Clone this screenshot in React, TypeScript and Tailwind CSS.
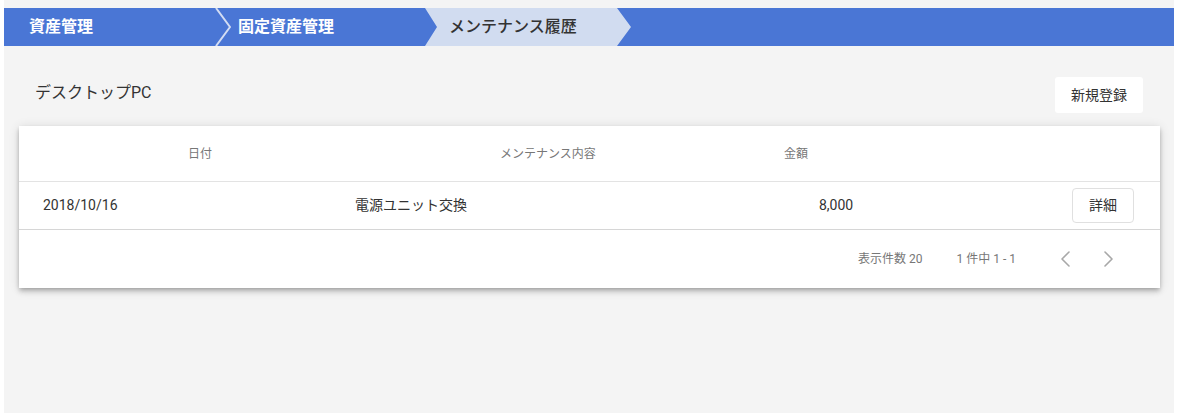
const font = { fontFamily: 'Roboto, "Noto Sans CJK JP", sans-serif' };

const Chevron = ({ dir }: { dir: "left" | "right" }) => (
  <svg width="11" height="18" viewBox="0 0 11 18" fill="none">
    <polyline
      points={dir === "left" ? "9,2 2,9 9,16" : "2,2 9,9 2,16"}
      stroke="#a8a8a8"
      strokeWidth="1.6"
      strokeLinecap="round"
      strokeLinejoin="round"
    />
  </svg>
);

const App = () => {
  return (
    <div className="min-h-[413px] bg-white" style={font}>
      <div className="ml-[4px] w-[1170px] min-h-[413px] bg-[#f4f4f4] pt-[8px]">
        {/* breadcrumb */}
        <div className="flex h-[38px] bg-[#4a76d5]">
          <div className="w-[211px] flex items-center pl-[25px] text-white font-bold text-[16px]">
            資産管理
          </div>
          <svg width="16" height="38" viewBox="0 0 16 38" fill="none" className="shrink-0">
            <polyline points="1,0 15,19 1,38" stroke="#d3ddf3" strokeWidth="2" />
          </svg>
          <div className="w-[194px] flex items-center pl-[7px] text-white font-bold text-[16px]">
            固定資産管理
          </div>
          <div className="w-[206px] flex items-center pl-[24px] bg-[#d1dcf0] text-[#333] font-medium text-[16px] [clip-path:polygon(0_0,192px_0,206px_50%,192px_100%,0_100%,12px_50%)]">
            メンテナンス履歴
          </div>
        </div>

        {/* title row */}
        <div className="flex items-center justify-between px-[31px] mt-[31px]">
          <h1 className="text-[16px] text-[#333] mt-[-4px]">デスクトップPC</h1>
          <button className="w-[88px] h-[36px] bg-white rounded-[3px] text-[14px] text-[#333]">
            新規登録
          </button>
        </div>

        {/* card */}
        <div className="mx-[15px] mt-[13px] w-[1141px] bg-white shadow-[0_2px_4px_-1px_rgba(0,0,0,0.2),0_4px_5px_0_rgba(0,0,0,0.14),0_1px_10px_0_rgba(0,0,0,0.12)]">
          <div className="flex items-center h-[56px] pl-[169px] text-[12px] text-[#777] border-b border-[#e3e3e3]">
            <div className="w-[312px]">日付</div>
            <div className="w-[284px]">メンテナンス内容</div>
            <div>金額</div>
          </div>
          <div className="flex items-center h-[48px] pl-[24px] pr-[26px] text-[14px] text-[#333] border-b border-[#d6d6d6]">
            <div className="w-[312px]">2018/10/16</div>
            <div className="w-[464px]">電源ユニット交換</div>
            <div className="flex-1">8,000</div>
            <button className="w-[62px] h-[35px] border border-[#e0e0e0] rounded-[4px] text-[14px] text-[#333]">
              詳細
            </button>
          </div>
          <div className="flex items-center justify-end h-[58px] pr-[46px] text-[12px] text-[#777]">
            <span>表示件数 20</span>
            <span className="ml-[34px]">1 件中 1 - 1</span>
            <div className="flex items-center ml-[44px] gap-[32px]">
              <Chevron dir="left" />
              <Chevron dir="right" />
            </div>
          </div>
        </div>
      </div>
    </div>
  );
};

export default App;
